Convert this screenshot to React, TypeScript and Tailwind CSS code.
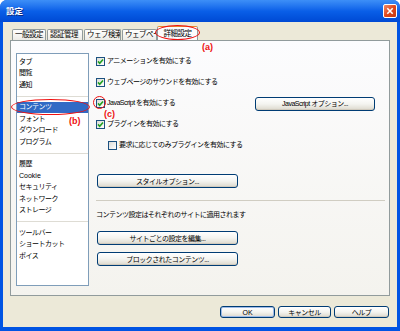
import React from "react";

const TABS = [
  { label: "一般設定", w: "w-[34px]" },
  { label: "認証管理", w: "w-[36px]" },
  { label: "ウェブ検索", w: "w-[37px]" },
  { label: "ウェブページ", w: "w-[35px]" },
];

// list groups in the left sidebar
const GROUPS = [
  ["タブ", "閲覧", "通知"],
  ["コンテンツ", "フォント", "ダウンロード", "プログラム"],
  ["履歴", "Cookie", "セキュリティ", "ネットワーク", "ストレージ"],
  ["ツールバー", "ショートカット", "ボイス"],
];

const ROWS = [
  { label: "アニメーションを有効にする", checked: true },
  { label: "ウェブページのサウンドを有効にする", checked: true },
  { label: "JavaScript を有効にする", checked: true, button: "JavaScript オプション..." },
  { label: "プラグインを有効にする", checked: true },
  { label: "要求に応じてのみプラグインを有効にする", checked: false, indent: true },
];

function XpButton({ children, className = "", primary = false }: { children: React.ReactNode; className?: string; primary?: boolean }) {
  return (
    <div
      className={`flex items-center justify-center rounded-[3px] border border-[#003c74] bg-linear-to-b from-white via-[#f4f4f0] to-[#dcd8cc] text-black leading-none ${
        primary ? "shadow-[inset_0_0_0_1px_#9ebbe8]" : "shadow-[inset_0_-1px_0_#d0cabd]"
      } ${className}`}
    >
      {children}
    </div>
  );
}

function Check({ checked }: { checked: boolean }) {
  return (
    <span className="w-[9px] h-[9px] shrink-0 border border-[#1c5180] bg-linear-to-br from-[#dcdcd7] to-white flex items-center justify-center">
      {checked && (
        <svg viewBox="0 0 7 7" className="w-[7px] h-[7px]">
          <path d="M1 3.4 L2.7 5.2 L6 1.4" stroke="#21a121" strokeWidth="1.6" fill="none" />
        </svg>
      )}
    </span>
  );
}

function Sidebar() {
  return (
    <div className="mt-[12px] w-[73px] h-[233px] shrink-0 bg-white border border-[#7f9db9] pt-[2px] flex flex-col">
      {GROUPS.map((group, gi) => (
        <div key={gi} className="flex flex-col">
          {gi > 0 && <div className="my-[5px] h-px bg-[#dedcd4]" />}
          {group.map((item) => {
            const selected = item === "コンテンツ";
            return (
              <div
                key={item}
                className={`h-[11.5px] flex items-center pl-[2px] ${selected ? "bg-[#316ac5] text-white" : "text-black"} ${
                  item === "Cookie" ? "tracking-normal" : ""
                }`}
              >
                {item}
              </div>
            );
          })}
        </div>
      ))}
    </div>
  );
}

function Content() {
  return (
    <div className="ml-[7px] w-[279px] pt-[10px] flex flex-col">
      {ROWS.map((r) => (
        <div key={r.label} className={`h-[21px] flex items-center ${r.indent ? "pl-[12px]" : ""}`}>
          <Check checked={r.checked} />
          <span className="ml-[2px] flex-1">{r.label}</span>
          {r.button && <XpButton className="w-[120px] h-[14px]">{r.button}</XpButton>}
        </div>
      ))}
      <XpButton className="mt-[18px] ml-px w-[141px] h-[14px]">スタイルオプション...</XpButton>
      <div className="mt-[12px] h-px bg-[#d0cdc2] w-[289px]" />
      <div className="mt-[9px] h-[10px] flex items-center">コンテンツ設定はそれぞれのサイトに適用されます</div>
      <XpButton className="mt-[11px] ml-px w-[141px] h-[14px]">サイトごとの設定を編集...</XpButton>
      <XpButton className="mt-[7px] ml-px w-[141px] h-[14px]">ブロックされたコンテンツ...</XpButton>
    </div>
  );
}

export default function App() {
  return (
    <div className="relative w-[400px] h-[331px] flex flex-col bg-[#0054e3] rounded-t-[7px] overflow-hidden font-['Liberation_Sans','Noto_Sans_CJK_JP',sans-serif] text-[7px] tracking-[-0.5px] text-black">
      {/* title bar */}
      <div className="h-[22px] shrink-0 flex items-center justify-between pl-[6px] pr-[3px] bg-linear-to-b from-[#3d8ff7] via-[#0a5fe8] to-[#0049d4]">
        <span className="text-white font-bold text-[8.5px] tracking-normal [text-shadow:1px_1px_0_#0a2a80]">設定</span>
        <div className="w-[14px] h-[14px] rounded-[2px] border border-white bg-linear-to-br from-[#f08a66] via-[#e0471d] to-[#c23a10] flex items-center justify-center">
          <svg viewBox="0 0 8 8" className="w-[8px] h-[8px]">
            <path d="M1.3 1.3 L6.7 6.7 M6.7 1.3 L1.3 6.7" stroke="white" strokeWidth="1.6" />
          </svg>
        </div>
      </div>

      {/* dialog body */}
      <div className="flex-1 mx-[3px] mb-[4px] bg-[#ece9d8] flex flex-col">
        <div className="mt-[4px] ml-[9px] h-[14px] flex items-end">
          {TABS.map((t, i) => (
            <div
              key={t.label}
              className={`${t.w} h-[11px] ${i > 0 ? "ml-px" : ""} overflow-hidden whitespace-nowrap rounded-t-[2px] border border-b-0 border-[#919b9c] bg-linear-to-b from-white to-[#ecebe6] flex items-center pl-[2px] text-[7.5px]`}
            >
              {t.label}
            </div>
          ))}
          <div className="w-[41px] h-[14px] rounded-t-[2px] border border-b-0 border-[#919b9c] border-t-[#e68b2c] bg-[#fcfcfe] flex items-center justify-center text-[7.5px]">
            詳細設定
          </div>
        </div>

        <div className="ml-[7px] w-[380px] h-[256px] border border-[#919b9c] bg-linear-to-b from-[#fcfcfe] to-[#f4f3ee] flex pl-[5px]">
          <Sidebar />
          <Content />
        </div>

        <div className="mt-[10px] mr-[8px] flex justify-end gap-[3px]">
          <XpButton primary className="w-[55px] h-[12px] tracking-normal">OK</XpButton>
          <XpButton className="w-[53px] h-[12px]">キャンセル</XpButton>
          <XpButton className="w-[55px] h-[12px]">ヘルプ</XpButton>
        </div>
      </div>

      {/* red annotations drawn over the screenshot */}
      <div className="absolute left-[155px] top-[25px] w-[45px] h-[15px] rounded-[50%] border-[1.5px] border-[#ee1111]" />
      <span className="absolute left-[202px] top-[41px] text-[9px] font-bold text-[#ee1111] tracking-normal">(a)</span>
      <div className="absolute left-[11px] top-[99px] w-[79px] h-[16px] rounded-[50%] border-[1.5px] border-[#ee1111]" />
      <span className="absolute left-[69px] top-[115px] text-[9px] font-bold text-[#ee1111] tracking-normal">(b)</span>
      <div className="absolute left-[93px] top-[96px] w-[13px] h-[13px] rounded-full border-[1.5px] border-[#ee1111]" />
      <span className="absolute left-[104px] top-[108px] text-[9px] font-bold text-[#ee1111] tracking-normal">(c)</span>
    </div>
  );
}
